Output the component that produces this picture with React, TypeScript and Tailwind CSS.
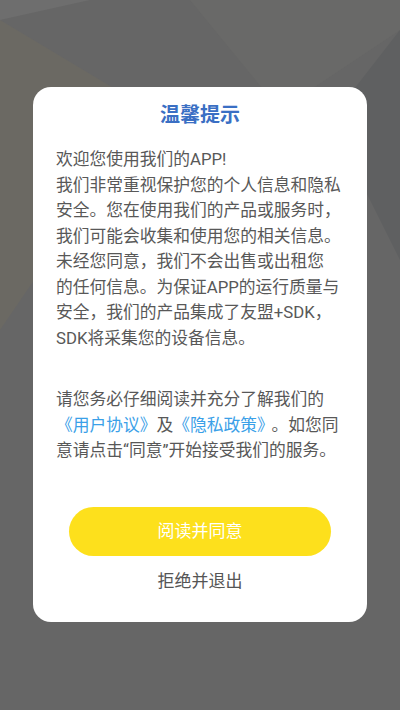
const FONT = { fontFamily: 'Roboto, "Noto Sans CJK SC", sans-serif' }

const PARA_ONE = [
  '欢迎您使用我们的APP!',
  '我们非常重视保护您的个人信息和隐私',
  '安全。您在使用我们的产品或服务时，',
  '我们可能会收集和使用您的相关信息。',
  '未经您同意，我们不会出售或出租您',
  '的任何信息。为保证APP的运行质量与',
  '安全，我们的产品集成了友盟+SDK，',
  'SDK将采集您的设备信息。',
]

function Backdrop() {
  return (
    <svg className="absolute inset-0 h-full w-full" viewBox="0 0 400 710" preserveAspectRatio="none">
      <polygon points="0,0 90,0 0,20" fill="#6e6e6e" />
      <polygon points="0,20 150,110 0,330" fill="#6f6b60" opacity="0.55" />
      <polygon points="330,120 400,30 400,260" fill="#5f6061" />
      <polygon points="190,0 400,0 400,30 280,110" fill="#6a6a69" opacity="0.6" />
    </svg>
  )
}

export default function App() {
  return (
    <div className="relative h-[710px] w-[400px] overflow-hidden bg-[#666666]" style={FONT}>
      <Backdrop />
      <div className="relative px-[33px] pt-[87px]">
        <div className="flex h-[535px] flex-col rounded-[18px] bg-white px-[23px]">
          <h1 className="mt-[14px] text-center text-[20px] font-bold leading-[28px] text-[#3a6fc4]">
            温馨提示
          </h1>

          <div className="mt-[18px] text-[16.75px] leading-[25.5px] text-[#585858]">
            {PARA_ONE.map((line) => (
              <div key={line} className="whitespace-nowrap">{line}</div>
            ))}
          </div>

          <div className="mt-[36px] text-[16.75px] leading-[25.5px] text-[#585858]">
            <div className="whitespace-nowrap">请您务必仔细阅读并充分了解我们的</div>
            <div className="whitespace-nowrap">
              <span className="text-[#3aa0e8]">《用户协议》</span>及
              <span className="text-[#3aa0e8]">《隐私政策》</span>
              <span className="ml-[6px]">。如您同</span>
            </div>
            <div className="whitespace-nowrap">意请点击“同意”开始接受我们的服务。</div>
          </div>

          <div className="mt-auto mb-[28px] flex flex-col items-center">
            <button className="h-[49px] w-[262px] rounded-full bg-[#fde01c] text-[17px] text-white">
              阅读并同意
            </button>
            <button className="mt-[12px] h-[26px] text-[17px] leading-[26px] text-[#555555]">
              拒绝并退出
            </button>
          </div>
        </div>
      </div>
    </div>
  )
}
